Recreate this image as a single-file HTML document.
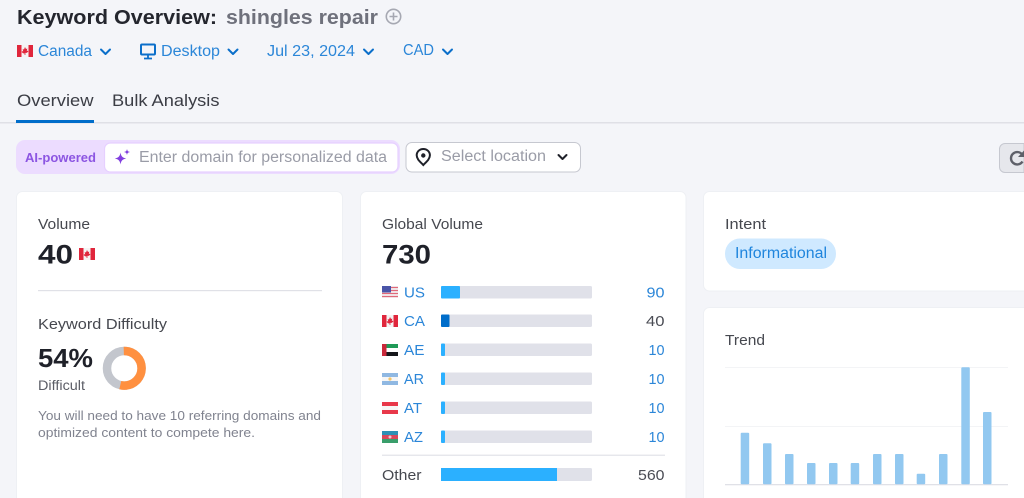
<!DOCTYPE html>
<html><head><meta charset="utf-8"><title>Keyword Overview</title>
<style>
html,body{margin:0;padding:0;width:1024px;height:498px;overflow:hidden;background:#f4f5f9}
svg{display:block;position:absolute;left:0;top:0;filter:blur(.3px)}
text{font-family:"Liberation Sans",sans-serif}
.b{font-weight:700}
.card{fill:#fff;stroke:#eef0f4;stroke-width:1}
.lab{font-size:15px;fill:#46484f}
.blue{fill:#2b86d8}
.chev{fill:none;stroke:#0b6fca;stroke-width:2;stroke-linecap:round;stroke-linejoin:round}
.track{fill:#e0e1e9}
.fill{fill:#2bb0ff}
.bar{fill:#92c8f0}
</style></head><body>
<svg width="1024" height="498" viewBox="0 0 1024 498" xmlns="http://www.w3.org/2000/svg">
<defs>
<g id="ca"><rect width="16" height="12" fill="#f4f4f4"/><rect width="4.500" height="12" fill="#e0263c"/><rect x="11.500" width="4.500" height="12" fill="#e0263c"/><path d="M8 2l1 2 1.300-.5-.5 2.500 1.200-.4.300 1-1.600 1.300H8.400V10h-.8V8.400H6.300L4.700 7.100l.3-1 1.200.4-.5-2.500L7 4.500z" fill="#e0263c"/></g>
</defs>
<rect width="1024" height="498" fill="#f4f5f9"/>

<text x="17" y="24" class="b" font-size="20.500" fill="#24262e" textLength="200" lengthAdjust="spacingAndGlyphs">Keyword Overview:</text>
<text x="226" y="24" class="b" font-size="20.500" fill="#6f717c" textLength="152" lengthAdjust="spacingAndGlyphs">shingles repair</text>
<circle cx="393.500" cy="16.500" r="7.200" fill="none" stroke="#a6a8b2" stroke-width="1.600"/>
<path d="M393.500 12.500v8M389.500 16.500h8" stroke="#a6a8b2" stroke-width="1.600"/>

<use href="#ca" x="17" y="45"/>
<text x="38" y="56" font-size="15.500" class="blue" textLength="54" lengthAdjust="spacingAndGlyphs">Canada</text>
<path class="chev" d="M101 49.500l4.500 4.500 4.500-4.500"/>
<rect x="141" y="44.500" width="14" height="10" rx="1" fill="none" stroke="#0b6fca" stroke-width="2"/>
<path d="M148 55v3M144 58.500h8" stroke="#0b6fca" stroke-width="1.800"/>
<text x="161" y="56" font-size="15.500" class="blue" textLength="59" lengthAdjust="spacingAndGlyphs">Desktop</text>
<path class="chev" d="M228.500 49.500l4.500 4.500 4.500-4.500"/>
<text x="267" y="56" font-size="15.500" class="blue" textLength="88" lengthAdjust="spacingAndGlyphs">Jul 23, 2024</text>
<path class="chev" d="M364 49.500l4.500 4.500 4.500-4.500"/>
<text x="403" y="55" font-size="15.500" class="blue" textLength="31" lengthAdjust="spacingAndGlyphs">CAD</text>
<path class="chev" d="M443 49.500l4.500 4.500 4.500-4.500"/>

<text x="17" y="106" font-size="17" fill="#3b3d45" textLength="76.500" lengthAdjust="spacingAndGlyphs">Overview</text>
<text x="112" y="106" font-size="17" fill="#3b3d45" textLength="107.500" lengthAdjust="spacingAndGlyphs">Bulk Analysis</text>
<rect x="0" y="122" width="1024" height="1.500" fill="#dfe0e6"/>
<rect x="16" y="120" width="78" height="3" fill="#006dca"/>

<rect x="16" y="140" width="384" height="34" rx="9" fill="#ecdcff"/>
<rect x="104.500" y="143" width="293.500" height="29" rx="6" fill="#fff" stroke="#e6d0ff" stroke-width="1.200"/>
<text x="25" y="162" class="b" font-size="13" fill="#8c55e2" textLength="71" lengthAdjust="spacingAndGlyphs">AI-powered</text>
<path d="M120.500 152.500c.7 4 1.800 5 5.700 6-3.900 1-5 2-5.700 6-.7-4-1.800-5-5.700-6 3.900-1 5-2 5.700-6z" fill="#8240e0"/>
<path d="M127 149c.4 2 .9 2.500 3 3-2.100.5-2.600 1-3 3-.4-2-.9-2.500-3-3 2.100-.5 2.600-1 3-3z" fill="#8240e0"/>
<text x="139" y="162" font-size="15.500" fill="#9a9ca7" textLength="248" lengthAdjust="spacingAndGlyphs">Enter domain for personalized data</text>

<rect x="406" y="142.500" width="174.500" height="29.500" rx="6" fill="#fff" stroke="#c6c8d0" stroke-width="1"/>
<path d="M423.300 149c-3.800 0-6.600 2.800-6.600 6.300 0 3.900 3.700 6.700 6.600 9.700 2.900-3 6.600-5.800 6.600-9.700 0-3.500-2.800-6.300-6.600-6.300z" fill="none" stroke="#1f2129" stroke-width="2"/>
<circle cx="423.300" cy="155.500" r="2.200" fill="#1f2129"/>
<text x="441" y="161" font-size="15.500" fill="#9a9ca7" textLength="105" lengthAdjust="spacingAndGlyphs">Select location</text>
<path d="M558.500 155l4 4 4-4" fill="none" stroke="#1f2129" stroke-width="2" stroke-linecap="round" stroke-linejoin="round"/>

<path d="M1024 143.500H1005a5.500 5.500 0 0 0-5.500 5.500v18a5.500 5.500 0 0 0 5.500 5.500H1024z" fill="#e6e7ec" stroke="#c6c8d0"/>
<path d="M1022.500 155a6.200 6.200 0 1 0 0 6.500" fill="none" stroke="#5e6069" stroke-width="2.400"/>
<path d="M1024 150.500v6.500h-6z" fill="#5e6069"/>

<path class="card" d="M16.500 499V197.500a6 6 0 0 1 6-6H336.500a6 6 0 0 1 6 6V499z"/>
<path class="card" d="M360.500 499V197.500a6 6 0 0 1 6-6H680a6 6 0 0 1 6 6V499z"/>
<path class="card" d="M1025 191.500H709.500a6 6 0 0 0-6 6V285a6 6 0 0 0 6 6H1025z"/>
<path class="card" d="M1025 307.500H709.500a6 6 0 0 0-6 6V499H1025z"/>

<text x="38" y="229" class="lab" textLength="52" lengthAdjust="spacingAndGlyphs">Volume</text>
<text x="38" y="263.500" class="b" font-size="27" fill="#1f2129" textLength="35" lengthAdjust="spacingAndGlyphs">40</text>
<use href="#ca" x="79" y="248"/>
<rect x="38" y="290" width="284" height="1.200" fill="#e0e1e7"/>
<text x="38" y="329" class="lab" textLength="129" lengthAdjust="spacingAndGlyphs">Keyword Difficulty</text>
<text x="38" y="367" class="b" font-size="26" fill="#1f2129" textLength="55" lengthAdjust="spacingAndGlyphs">54%</text>
<text x="38" y="390" font-size="13.500" fill="#5b5d66" textLength="47" lengthAdjust="spacingAndGlyphs">Difficult</text>
<circle cx="124.300" cy="368.300" r="17.300" fill="none" stroke="#c3c6cd" stroke-width="8.500"/>
<circle cx="124.300" cy="368.300" r="17.300" fill="none" stroke="#ff9040" stroke-width="8.500" pathLength="100" stroke-dasharray="54 46" transform="rotate(-90 124.300 368.300)"/>
<text x="38" y="420" font-size="13" fill="#80838f" textLength="283" lengthAdjust="spacingAndGlyphs">You will need to have 10 referring domains and</text>
<text x="38" y="437" font-size="13" fill="#80838f" textLength="217" lengthAdjust="spacingAndGlyphs">optimized content to compete here.</text>

<text x="382" y="229" class="lab" textLength="101" lengthAdjust="spacingAndGlyphs">Global Volume</text>
<text x="382" y="263.500" class="b" font-size="27" fill="#1f2129" textLength="49" lengthAdjust="spacingAndGlyphs">730</text>

<!-- US -->
<g transform="translate(382,286)"><rect width="16" height="12" fill="#f3f3f5"/><path d="M0 1.500h16M0 4.500h16M0 7.500h16M0 10.500h16" stroke="#e0697a" stroke-width="1.200"/><rect width="9" height="6.500" fill="#4a55a8"/></g>
<text x="404" y="297.500" font-size="15" class="blue" textLength="21" lengthAdjust="spacingAndGlyphs">US</text>
<rect class="track" x="441" y="286" width="151" height="12.500" rx="1.500"/><rect class="fill" x="441" y="286" width="19" height="12.500" rx="1"/>
<text x="646.500" y="297.500" font-size="15" class="blue" textLength="18" lengthAdjust="spacingAndGlyphs">90</text>
<!-- CA -->
<use href="#ca" x="382" y="315"/>
<text x="404" y="326" font-size="15" class="blue" textLength="21" lengthAdjust="spacingAndGlyphs">CA</text>
<rect class="track" x="441" y="314.500" width="151" height="12.500" rx="1.500"/><rect x="441" y="314.500" width="8.500" height="12.500" rx="1" fill="#006dca"/>
<text x="646" y="326" font-size="15" fill="#4b4d55" textLength="18.500" lengthAdjust="spacingAndGlyphs">40</text>
<!-- AE -->
<g transform="translate(382,344)"><rect width="16" height="12" fill="#fff"/><rect x="4" width="12" height="4" fill="#1f9a57"/><rect x="4" y="8" width="12" height="4" fill="#15161a"/><rect width="4.500" height="12" fill="#c9283a"/></g>
<text x="404" y="355" font-size="15" class="blue" textLength="20.500" lengthAdjust="spacingAndGlyphs">AE</text>
<rect class="track" x="441" y="343.500" width="151" height="12.500" rx="1.500"/><rect class="fill" x="441" y="343.500" width="4" height="12.500" rx="1"/>
<text x="648.500" y="355" font-size="15" class="blue" textLength="16" lengthAdjust="spacingAndGlyphs">10</text>
<!-- AR -->
<g transform="translate(382,373)"><rect width="16" height="12" fill="#f6f6f6"/><rect width="16" height="4" fill="#8fb8e2"/><rect y="8" width="16" height="4" fill="#8fb8e2"/><circle cx="8" cy="6" r="1.600" fill="#f2c46b"/></g>
<text x="404" y="384" font-size="15" class="blue" textLength="20" lengthAdjust="spacingAndGlyphs">AR</text>
<rect class="track" x="441" y="372.500" width="151" height="12.500" rx="1.500"/><rect class="fill" x="441" y="372.500" width="4" height="12.500" rx="1"/>
<text x="648.500" y="384" font-size="15" class="blue" textLength="16" lengthAdjust="spacingAndGlyphs">10</text>
<!-- AT -->
<g transform="translate(382,402)"><rect width="16" height="12" fill="#f6f6f6"/><rect width="16" height="4" fill="#e8384a"/><rect y="8" width="16" height="4" fill="#e8384a"/></g>
<text x="404" y="413" font-size="15" class="blue" textLength="18" lengthAdjust="spacingAndGlyphs">AT</text>
<rect class="track" x="441" y="401.500" width="151" height="12.500" rx="1.500"/><rect class="fill" x="441" y="401.500" width="4" height="12.500" rx="1"/>
<text x="648.500" y="413" font-size="15" class="blue" textLength="16" lengthAdjust="spacingAndGlyphs">10</text>
<!-- AZ -->
<g transform="translate(382,431)"><rect width="16" height="4" fill="#2d90b4"/><rect y="4" width="16" height="4" fill="#d9485a"/><rect y="8" width="16" height="4" fill="#3a9e6b"/><circle cx="8" cy="6" r="1.500" fill="#f3c5cb"/></g>
<text x="404" y="442" font-size="15" class="blue" textLength="19" lengthAdjust="spacingAndGlyphs">AZ</text>
<rect class="track" x="441" y="430.500" width="151" height="12.500" rx="1.500"/><rect class="fill" x="441" y="430.500" width="4" height="12.500" rx="1"/>
<text x="648.500" y="442" font-size="15" class="blue" textLength="16" lengthAdjust="spacingAndGlyphs">10</text>

<rect x="382" y="454.700" width="283" height="1" fill="#dcdde3"/>
<text x="382" y="480" class="lab" textLength="39.500" lengthAdjust="spacingAndGlyphs">Other</text>
<rect class="track" x="441" y="468" width="151" height="13" rx="1.500"/><rect class="fill" x="441" y="468" width="116" height="13"/>
<text x="638" y="480" font-size="15" fill="#4b4d55" textLength="26.500" lengthAdjust="spacingAndGlyphs">560</text>

<text x="725" y="229" class="lab" textLength="41" lengthAdjust="spacingAndGlyphs">Intent</text>
<rect x="725" y="238.500" width="111" height="30.500" rx="15" fill="#cfe9ff"/>
<text x="735" y="258" font-size="15.500" fill="#1f85dd" textLength="92" lengthAdjust="spacingAndGlyphs">Informational</text>

<text x="725" y="345" class="lab" textLength="40" lengthAdjust="spacingAndGlyphs">Trend</text>
<rect x="725" y="367" width="283" height="1" fill="#f3f4f6"/>
<rect x="725" y="426" width="283" height="1" fill="#f3f4f6"/>
<rect x="725" y="484" width="283" height="1.300" fill="#e0e1e7"/>
<rect class="bar" x="740.700" y="432.700" width="8.500" height="51.500" rx="1"/>
<rect class="bar" x="763" y="443.300" width="8.500" height="41" rx="1"/>
<rect class="bar" x="785" y="454" width="8.500" height="30.300" rx="1"/>
<rect class="bar" x="807" y="463" width="8.500" height="21.300" rx="1"/>
<rect class="bar" x="829" y="463" width="8.500" height="21.300" rx="1"/>
<rect class="bar" x="850.700" y="463" width="8.500" height="21.300" rx="1"/>
<rect class="bar" x="873" y="454" width="8.500" height="30.300" rx="1"/>
<rect class="bar" x="895" y="454" width="8.500" height="30.300" rx="1"/>
<rect class="bar" x="916.700" y="473.700" width="8.500" height="10.600" rx="1"/>
<rect class="bar" x="939" y="454" width="8.500" height="30.300" rx="1"/>
<rect class="bar" x="961.300" y="367.300" width="8.500" height="117" rx="1"/>
<rect class="bar" x="983" y="412" width="8.500" height="72.300" rx="1"/>
</svg>
</body></html>
